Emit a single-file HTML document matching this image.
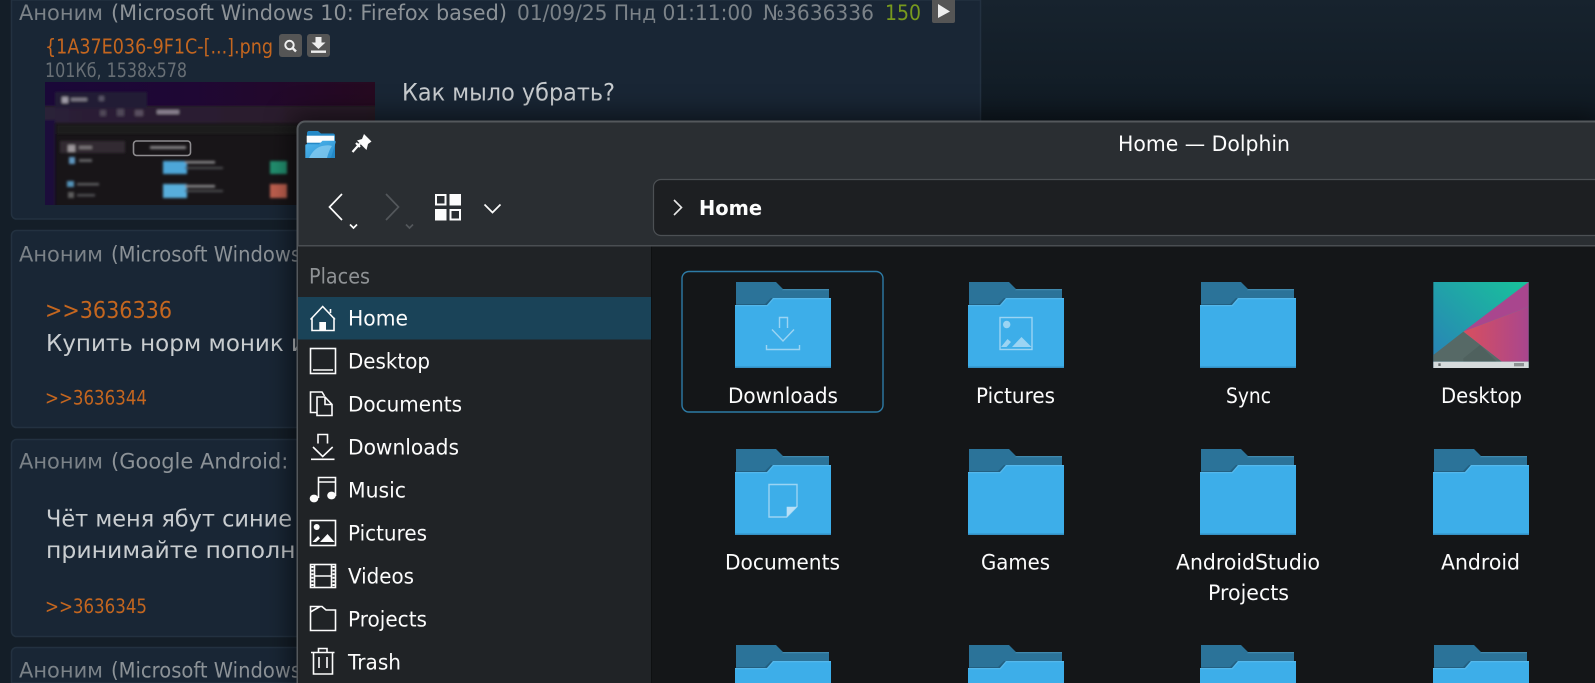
<!DOCTYPE html>
<html>
<head>
<meta charset="utf-8">
<style>
html,body{margin:0;padding:0;width:1595px;height:683px;overflow:hidden;background:#15202a}
#root{position:relative;width:1595px;height:683px;overflow:hidden}
svg{display:block}
#root>svg{position:absolute;left:0;top:0}
text{font-family:"DejaVu Sans","Liberation Sans",sans-serif;font-size:21.2px;fill:#fcfcfc}
.g{fill:#7b8288}.h{fill:#8c9297}.b{fill:#c9cdd0;font-size:23.3px}.o{fill:#c4661f}
#win{position:absolute;left:297px;top:121px;width:1298px;height:562px;background:#2a2e32;border-radius:8px 0 0 0;box-shadow:0 0 26px 6px rgba(0,0,0,.55)}
</style>
</head>
<body>
<div id="root">
<svg width="1595" height="683" viewBox="0 0 1595 683">
<defs>
<linearGradient id="bg" x1="0" y1="0" x2="0" y2="1"><stop offset="0" stop-color="#17232e"/><stop offset="1" stop-color="#101a23"/></linearGradient>
<linearGradient id="thumbtop" x1="0" y1="0" x2="1" y2="0"><stop offset="0" stop-color="#1a0838"/><stop offset=".45" stop-color="#1f0734"/><stop offset="1" stop-color="#260a20"/></linearGradient>
<linearGradient id="thumbband" x1="0" y1="0" x2="1" y2="0"><stop offset="0" stop-color="#2a2038"/><stop offset="1" stop-color="#2a1a28"/></linearGradient>
<filter id="bl"><feGaussianBlur stdDeviation="1.2"/></filter>
</defs>
<rect width="1595" height="683" fill="#141e28"/>
<rect x="980" width="615" height="125" fill="url(#bg)"/>
<g fill="#192635" stroke="#233140" stroke-width="1.5">
<path d="M11.5 0V214a5 5 0 0 0 5 5H975.5a5 5 0 0 0 5-5V0Z"/>
<rect x="11.5" y="230.5" width="969" height="197" rx="5"/>
<rect x="11.5" y="439.5" width="969" height="197" rx="5"/>
<path d="M11.5 683V652.5a5 5 0 0 1 5-5H975.5a5 5 0 0 1 5 5V683Z"/>
</g>
<text x="19" y="20" class="g" textLength="84" lengthAdjust="spacingAndGlyphs">Аноним</text>
<text x="111" y="20" class="h" textLength="396" lengthAdjust="spacingAndGlyphs">(Microsoft Windows 10: Firefox based)</text>
<text x="517" y="20" class="g" textLength="236" lengthAdjust="spacingAndGlyphs">01/09/25 Пнд 01:11:00</text>
<text x="763" y="20" class="g" textLength="111" lengthAdjust="spacingAndGlyphs">№3636336</text>
<text x="885" y="20" style="fill:#789a1e" textLength="36" lengthAdjust="spacingAndGlyphs">150</text>
<path d="M932 0H955V21a2 2 0 0 1-2 2H934a2 2 0 0 1-2-2Z" fill="#555"/>
<path d="M938 4L950 11.5L938 18Z" fill="#eee"/>
<text x="45" y="53.5" class="o" style="font-size:20px" textLength="228" lengthAdjust="spacingAndGlyphs">{1A37E036-9F1C-[...].png</text>
<rect x="279" y="34" width="23" height="23" rx="3" fill="#555"/>
<circle cx="289.5" cy="45" r="4.2" fill="none" stroke="#eee" stroke-width="2"/>
<path d="M292.5 48L296 51.5" stroke="#eee" stroke-width="2.4"/>
<rect x="307" y="34" width="23" height="23" rx="3" fill="#555"/>
<path d="M315.5 37H321.5V42.5H325.5L318.5 49L311.5 42.5H315.5Z" fill="#eee"/>
<rect x="311" y="50.5" width="15" height="2.4" fill="#eee"/>
<text x="45" y="77" class="g" style="font-size:19.5px;fill:#686f75" textLength="142" lengthAdjust="spacingAndGlyphs">101Кб, 1538x578</text>
<!-- thumbnail -->
<svg x="45" y="82" width="330" height="123" viewBox="45 82 330 123">
<rect x="45" y="82" width="330" height="123" fill="#181518"/>
<rect x="45" y="82" width="330" height="24" fill="url(#thumbtop)"/>
<g filter="url(#bl)">
<rect x="40" y="106" width="340" height="17" fill="url(#thumbband)"/>
<rect x="40" y="120" width="15" height="90" fill="#1c0a3a"/>
<rect x="55" y="92" width="92" height="16" fill="#241a36"/>
<rect x="57" y="125" width="318" height="9" fill="#1f1b1f"/>
<rect x="99" y="96" width="5" height="5" fill="#5a5468"/>
<rect x="62" y="97" width="6" height="6" fill="#a09ca8"/>
<rect x="71" y="98" width="16" height="3" fill="#7f7b88"/>
<rect x="100" y="110" width="6" height="6" fill="#4f4659"/>
<rect x="117" y="109" width="7" height="7" fill="#4f4659"/>
<rect x="135" y="110" width="8" height="6" fill="#5a5060"/>
<rect x="157" y="110" width="22" height="4" fill="#8a8190"/>
<rect x="60" y="141" width="65" height="12" fill="#302c30"/>
<rect x="68" y="145" width="7" height="7" fill="#9e989c"/>
<rect x="79" y="146" width="13" height="3" fill="#7a7578"/>
<rect x="69" y="157" width="6" height="7" fill="#5f96c0"/>
<rect x="79" y="159" width="13" height="3" fill="#626265"/>
<rect x="67" y="181" width="7" height="6" fill="#5493b8"/>
<rect x="77" y="183" width="22" height="2.5" fill="#5d5d60"/>
<rect x="68" y="192" width="6" height="6" fill="#5d5d5d"/>
<rect x="77" y="194" width="18" height="2.5" fill="#505052"/>
<rect x="150" y="146" width="36" height="3" fill="#858386"/>
<rect x="163" y="161" width="24" height="13" fill="#4da6d8"/>
<rect x="163" y="184" width="24" height="14" fill="#59aedb"/>
<rect x="185" y="161" width="30" height="2.5" fill="#8a8a8c"/>
<rect x="185" y="167" width="38" height="2" fill="#505052"/>
<rect x="185" y="185" width="30" height="2.5" fill="#8a8a8c"/>
<rect x="185" y="190" width="38" height="2" fill="#505052"/>
<rect x="270" y="161" width="17" height="13" fill="#23906f"/>
<rect x="270" y="184" width="17" height="14" fill="#c0614f"/>
</g>
<rect x="133.5" y="141" width="57" height="14.5" rx="3" fill="none" stroke="#8e8c8f" stroke-width="1.6"/>
</svg>
<text x="402" y="100.5" class="b" style="font-size:24px" textLength="213" lengthAdjust="spacingAndGlyphs">Как мыло убрать?</text>

<text x="19" y="261.5" class="g" textLength="84" lengthAdjust="spacingAndGlyphs">Аноним</text>
<text x="111" y="261.5" class="h" textLength="190" lengthAdjust="spacingAndGlyphs">(Microsoft Windows</text>
<text x="45" y="318" class="o" style="font-size:23.5px" textLength="127" lengthAdjust="spacingAndGlyphs">&gt;&gt;3636336</text>
<text x="46" y="351" class="b" textLength="260" lengthAdjust="spacingAndGlyphs">Купить норм моник и</text>
<text x="45" y="404.5" class="o" style="font-size:19.5px" textLength="102" lengthAdjust="spacingAndGlyphs">&gt;&gt;3636344</text>

<text x="19" y="468.5" class="g" textLength="84" lengthAdjust="spacingAndGlyphs">Аноним</text>
<text x="111" y="468.5" class="h" textLength="225" lengthAdjust="spacingAndGlyphs">(Google Android: Нет</text>
<text x="46" y="526.5" class="b" textLength="246" lengthAdjust="spacingAndGlyphs">Чёт меня ябут синие</text>
<text x="46" y="558" class="b" textLength="264" lengthAdjust="spacingAndGlyphs">принимайте пополне</text>
<text x="45" y="613" class="o" style="font-size:19.5px" textLength="102" lengthAdjust="spacingAndGlyphs">&gt;&gt;3636345</text>

<text x="19" y="677.5" class="g" textLength="84" lengthAdjust="spacingAndGlyphs">Аноним</text>
<text x="111" y="677.5" class="h" textLength="190" lengthAdjust="spacingAndGlyphs">(Microsoft Windows</text>
</svg>

<div id="win"></div>

<svg width="1595" height="683" viewBox="0 0 1595 683">
<defs>
<linearGradient id="wi" x1="0" y1="0" x2="1" y2="1"><stop offset="0" stop-color="#4fb6ee"/><stop offset="1" stop-color="#2b90cf"/></linearGradient>
<linearGradient id="dt" x1="0" y1="1" x2="1" y2="0"><stop offset="0" stop-color="#2a7fb8"/><stop offset="1" stop-color="#18c39a"/></linearGradient>
<linearGradient id="dr" x1="0" y1="0" x2="1" y2="0"><stop offset="0" stop-color="#d84f5e"/><stop offset="1" stop-color="#a9468e"/></linearGradient>
<symbol id="f" viewBox="0 0 96 86" width="96" height="86">
<path d="M1 0H41L48 7H94V26H1Z" fill="#2b7399"/>
<path d="M48 7H94V8.2H47Z" fill="#4089ad"/>
<path d="M1 22H30L36 16H60V26H1Z" fill="#235f80"/>
<path d="M0 23H32L38 16H96V86H0Z" fill="#3daee9"/>
<path d="M0 23H32L38 16H96V17.3H38.6L32.6 24.3H0Z" fill="#54b8ec"/>
<rect x="0" y="84.5" width="96" height="1.5" fill="#3490c4"/>
</symbol>
<symbol id="f3" viewBox="0 0 96 38" width="96" height="38">
<path d="M1 0H41L48 7H94V26H1Z" fill="#2b7399"/>
<path d="M48 7H94V8.2H47Z" fill="#4089ad"/>
<path d="M1 22H30L36 16H60V26H1Z" fill="#235f80"/>
<path d="M0 23H32L38 16H96V38H0Z" fill="#3daee9"/>
<path d="M0 23H32L38 16H96V17.3H38.6L32.6 24.3H0Z" fill="#54b8ec"/>
</symbol>
</defs>

<!-- window frame -->
<path d="M297.5 683V129a7.5 7.5 0 0 1 7.5-7.5H1595" fill="none" stroke="#54585c" stroke-width="2"/>
<rect x="298" y="245" width="1297" height="1.5" fill="#4a4e52"/>
<rect x="298" y="246.5" width="354" height="436.5" fill="#202326"/>
<rect x="652" y="246.5" width="943" height="436.5" fill="#141618"/>
<rect x="651" y="246.5" width="1" height="436.5" fill="#0e1011"/>

<!-- location bar -->
<path d="M1595 179.5H661a7.5 7.5 0 0 0-7.5 7.5V228a7.5 7.5 0 0 0 7.5 7.5H1595Z" fill="#1d1f22"/>
<path d="M1595 179.5H661a7.5 7.5 0 0 0-7.5 7.5V228a7.5 7.5 0 0 0 7.5 7.5H1595" fill="none" stroke="#4c5054" stroke-width="1.2"/>
<path d="M674 200L681.5 207.5L674 215" fill="none" stroke="#e8e8e8" stroke-width="1.6"/>
<text x="699" y="215" style="font-weight:bold;font-size:20.5px" textLength="63" lengthAdjust="spacingAndGlyphs">Home</text>

<text x="1118" y="151" textLength="172" lengthAdjust="spacingAndGlyphs">Home — Dolphin</text>

<!-- window icon -->
<path d="M307 158V133.5Q307 131 309 131H318L321 133.5H333Q335 133.5 335 136V158Z" fill="#2388c6"/>
<rect x="306.7" y="135.7" width="27.6" height="7" fill="#fbfcfd"/>
<path d="M305.3 145.5Q305.3 144.3 306.5 144.3H319L322.5 140.8H334.5Q336 140.8 335.6 142.5L331.5 156Q331 158 329 158H305.3Z" fill="url(#wi)"/>
<path d="M309 158Q314 148 322 146Q329 144.5 332 146Q329 150 327 158Z" fill="#8ed0f2" opacity=".7"/>

<!-- pin -->
<path d="M364 134L371.5 141.5L368 144L366.5 150L357 140.5L362 139Z" fill="#fcfcfc"/>
<path d="M360 143.5L352.5 152M360 147L356 143" stroke="#fcfcfc" stroke-width="2.2" fill="none"/>

<!-- toolbar icons -->
<g fill="none" stroke-width="1.7">
<path d="M342 194L329.5 207L342 220" stroke="#fcfcfc"/>
<path d="M350 224.5L353.5 228L357 224.5" stroke="#fcfcfc"/>
<path d="M386 194L398.5 207L386 220" stroke="#53575b"/>
<path d="M406 224.5L409.5 228L413 224.5" stroke="#53575b"/>
<path d="M484.5 204.5L492.5 212.5L500.5 204.5" stroke="#fcfcfc"/>
</g>
<g fill="#fcfcfc">
<rect x="449.5" y="194" width="11.5" height="11.5"/>
<rect x="435" y="209" width="11.5" height="11.5"/>
</g>
<g fill="none" stroke="#fcfcfc" stroke-width="2">
<rect x="436" y="195" width="9.5" height="9.5"/>
<rect x="450.5" y="210" width="9.5" height="9.5"/>
</g>

<!-- sidebar -->
<text x="309" y="283.3" style="fill:#8f9295" textLength="61" lengthAdjust="spacingAndGlyphs">Places</text>
<rect x="298" y="297" width="353" height="42.5" fill="#1a4358"/>
<text x="348" y="325.3" textLength="60" lengthAdjust="spacingAndGlyphs">Home</text>
<text x="348" y="368.3" textLength="82" lengthAdjust="spacingAndGlyphs">Desktop</text>
<text x="348" y="411.3" textLength="114" lengthAdjust="spacingAndGlyphs">Documents</text>
<text x="348" y="454.3" textLength="111" lengthAdjust="spacingAndGlyphs">Downloads</text>
<text x="348" y="497.3" textLength="58" lengthAdjust="spacingAndGlyphs">Music</text>
<text x="348" y="540.3" textLength="79" lengthAdjust="spacingAndGlyphs">Pictures</text>
<text x="348" y="583.3" textLength="66" lengthAdjust="spacingAndGlyphs">Videos</text>
<text x="348" y="626.3" textLength="79" lengthAdjust="spacingAndGlyphs">Projects</text>
<text x="348" y="669.3" textLength="53" lengthAdjust="spacingAndGlyphs">Trash</text>

<g fill="none" stroke="#fcfcfc" stroke-width="1.6">
<path d="M310.5 319.5L322.7 306.5L335 319.5M312 317.5V330.5H334V317.5M330.5 309V313"/>
<rect x="310.5" y="348.5" width="25" height="25"/>
<path d="M313 370H333"/>
<path d="M317 412.5H310.5V392H322L324.5 396"/>
<path d="M317 415.5V397H325L332 404.5V415.5ZM325 397V404.5H332"/>
<path d="M318 443.5V434.5H327.5V443.5M313 447L322.7 456.5L332.7 447M311 459.3H334.5"/>
<path d="M318.5 498V477.5H335.5V496M318.5 482H335.5"/>
<rect x="310.5" y="520.5" width="25" height="25"/>
<rect x="310.5" y="564.5" width="25" height="23"/>
<path d="M314.5 564.5V587.5M331.5 564.5V587.5M314.5 576H331.5"/>
<path d="M310.5 606.5H322L326 610H335.5V630.5H310.5ZM310.5 618V612L320 606.5"/>
<path d="M313.5 652.5V674H332.5V652.5M311 652.5H334.5M318.5 652V648.5H327V652M319 657V668M327 657V668"/>
</g>
<g fill="#fcfcfc">
<rect x="319.3" y="322" width="6.7" height="9"/>
<ellipse cx="314" cy="498.5" rx="4.3" ry="3.9"/>
<ellipse cx="331.5" cy="495.5" rx="4.3" ry="3.9"/>
<circle cx="316.7" cy="527" r="3"/>
<path d="M320 542L327.5 534L334.5 542Z"/>
<path d="M312.5 542L318 536L320 538.5L316 542Z"/>
</g>
<path d="M312.4 566V586M333.6 566V586" stroke="#fcfcfc" stroke-width="2.4" stroke-dasharray="2 1.6"/>

<!-- grid -->
<rect x="682" y="271.5" width="201" height="140.5" rx="7" fill="none" stroke="#2d7ba6" stroke-width="1.4"/>

<use href="#f" x="735" y="282"/>
<use href="#f" x="968" y="282"/>
<use href="#f" x="1200" y="282"/>

<!-- downloads + pictures emblems -->
<g fill="none" stroke="#9bd4f3" stroke-width="1.4">
<path d="M779.5 328V317.5H787.5V328M772 329.5L783 341L794 329.5M766.5 345V349.5H799.5V345"/>
<rect x="1000" y="317.5" width="32" height="32"/>
</g>
<g fill="#9bd4f3">
<circle cx="1006.7" cy="324.5" r="3.7"/>
<path d="M1012 347L1021.5 337L1031.5 347Z"/>
<path d="M1001 347L1007.5 339L1011 342L1006.5 347Z"/>
</g>

<!-- desktop thumb -->
<svg x="1433" y="282" width="96" height="86" viewBox="820 66 286 258">
<rect x="820" y="66" width="286" height="258" fill="url(#dt)"/>
<path d="M1106 66V140L910 215Z" fill="#a9468e"/>
<path d="M910 215L1106 140V305H1025Z" fill="url(#dr)"/>
<path d="M820 285L910 215L1025 305H820Z" fill="#566966"/>
<path d="M910 305V295L960 255L1010 305Z" fill="#4f615e"/>
<rect x="820" y="305" width="286" height="19" fill="#d6dbdc"/>
<rect x="1062" y="309" width="30" height="10" fill="#8d9293"/>
<rect x="835" y="310" width="7" height="8" fill="#666b6c"/>
</svg>

<text x="728" y="403" textLength="110" lengthAdjust="spacingAndGlyphs">Downloads</text>
<text x="976" y="403" textLength="79" lengthAdjust="spacingAndGlyphs">Pictures</text>
<text x="1226" y="403" textLength="45" lengthAdjust="spacingAndGlyphs">Sync</text>
<text x="1441" y="403" textLength="81" lengthAdjust="spacingAndGlyphs">Desktop</text>

<use href="#f" x="735" y="449"/>
<use href="#f" x="968" y="449"/>
<use href="#f" x="1200" y="449"/>
<use href="#f" x="1433" y="449"/>
<path d="M769 484.5H797V506.5L786.7 517H769Z" fill="none" stroke="#9bd4f3" stroke-width="1.4"/>
<path d="M786.7 506.7H797L786.7 517Z" fill="#b9e0f7"/>

<text x="725" y="569.5" textLength="115" lengthAdjust="spacingAndGlyphs">Documents</text>
<text x="981" y="569.5" textLength="69" lengthAdjust="spacingAndGlyphs">Games</text>
<text x="1176" y="569.5" textLength="144" lengthAdjust="spacingAndGlyphs">AndroidStudio</text>
<text x="1208" y="600" textLength="81" lengthAdjust="spacingAndGlyphs">Projects</text>
<text x="1441" y="569.5" textLength="79" lengthAdjust="spacingAndGlyphs">Android</text>

<use href="#f3" x="735" y="645"/>
<use href="#f3" x="968" y="645"/>
<use href="#f3" x="1200" y="645"/>
<use href="#f3" x="1433" y="645"/>
</svg>
</div>
</body>
</html>
